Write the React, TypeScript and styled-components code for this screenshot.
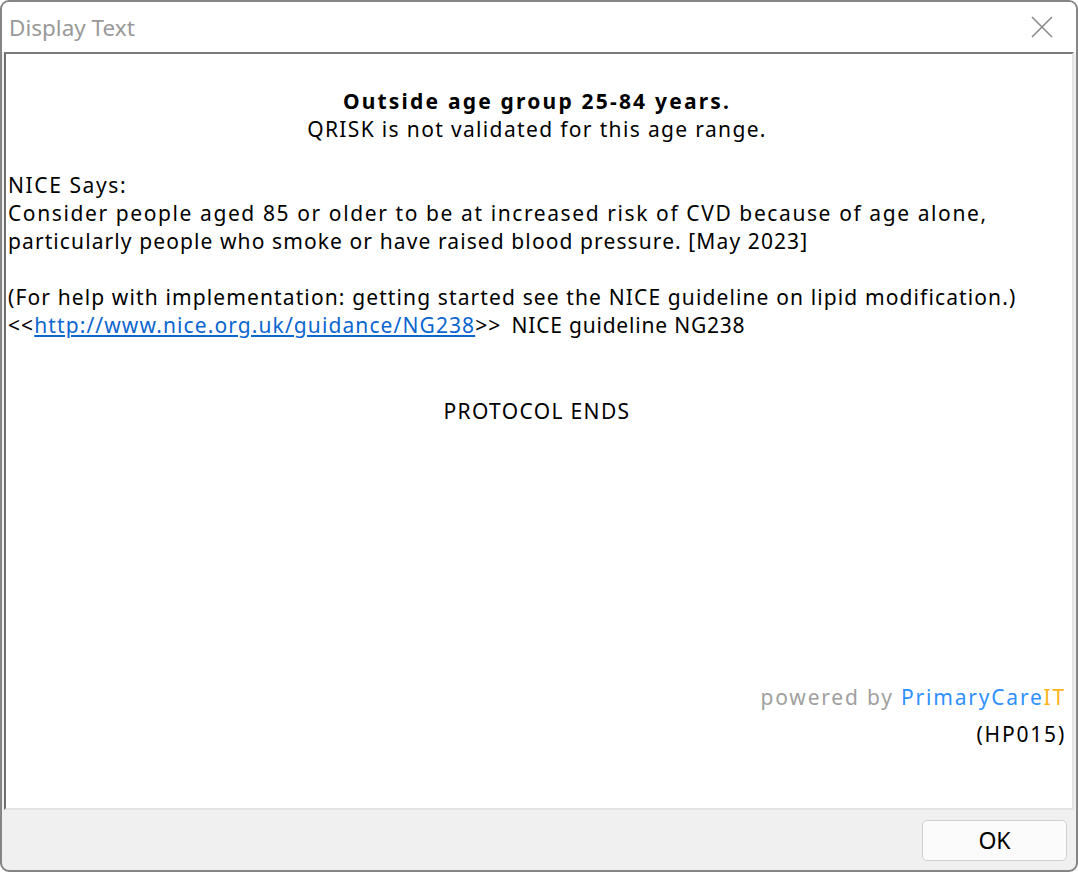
import React from "react";
import styled, { createGlobalStyle } from "styled-components";

const GlobalStyle = createGlobalStyle`
  html, body {
    margin: 0;
    padding: 0;
    background: #ffffff;
  }
`;

const Window = styled.div`
  box-sizing: border-box;
  width: 1078px;
  height: 872px;
  border: 2px solid #858585;
  border-radius: 9px;
  background: #f0f0f0;
  display: flex;
  flex-direction: column;
  overflow: hidden;
`;

const TitleBar = styled.div`
  height: 50px;
  background: #ffffff;
  display: flex;
  align-items: center;
  justify-content: space-between;
  padding: 0 14px 0 7px;
  font-family: "Noto Sans", "Open Sans", sans-serif;
  font-size: 22.5px;
  color: #999999;
`;

const CloseButton = styled.div`
  width: 40px;
  height: 40px;
  display: flex;
  align-items: center;
  justify-content: center;
`;

const Panel = styled.div`
  flex: 1;
  margin: 0 2px 0 2px;
  background: #ffffff;
  border-top: 2px solid #7a7a7a;
  border-left: 2px solid #6e6e6e;
  border-right: 2px solid #e3e3e3;
  border-bottom: 2px solid #e3e3e3;
  display: flex;
  flex-direction: column;
  padding: 33px 6px 55px 2px;
  font-family: "Noto Sans", "Open Sans", sans-serif;
  font-size: 21px;
  letter-spacing: 1.35px;
  line-height: 28px;
  color: #000000;
`;

const Centered = styled.div<{ $bold?: boolean }>`
  text-align: center;
  font-weight: ${(p) => (p.$bold ? 700 : 400)};
  letter-spacing: ${(p) => (p.$bold ? "2.2px" : "inherit")};
`;

const Para = styled.div<{ $gap?: number }>`
  margin-top: ${(p) => p.$gap ?? 0}px;
`;

const Line = styled.div<{ $track?: number }>`
  white-space: nowrap;
  letter-spacing: ${(p) => (p.$track != null ? `${p.$track}px` : "inherit")};
`;

const Link = styled.a`
  color: #0b66d0;
  text-decoration: underline;
`;

const Aside = styled.span`
  margin-left: 10px;
  letter-spacing: 0.8px;
`;

const Credits = styled.div`
  margin-top: auto;
  text-align: right;
  line-height: 37px;
  letter-spacing: 1.8px;
`;

const Powered = styled.span`
  color: #a0a0a0;
`;

const Brand = styled.span<{ $tone: string }>`
  color: ${(p) => p.$tone};
`;

const Footer = styled.div`
  height: 60px;
  display: flex;
  align-items: center;
  justify-content: flex-end;
  padding: 0 9px;
`;

const OkButton = styled.button`
  width: 145px;
  height: 41px;
  border: 1px solid #d0d0d0;
  border-radius: 5px;
  background: #fbfbfb;
  font-family: "Noto Sans", "Open Sans", sans-serif;
  font-size: 23px;
  color: #000;
  cursor: pointer;
`;

export default function App() {
  return (
    <>
      <GlobalStyle />
      <Window>
        <TitleBar>
          <span>Display Text</span>
          <CloseButton>
            <svg width="22" height="22" viewBox="0 0 22 22">
              <path d="M1 1 L21 21 M21 1 L1 21" stroke="#8a8a8a" strokeWidth="1.6" fill="none" />
            </svg>
          </CloseButton>
        </TitleBar>
        <Panel>
          <Centered $bold>Outside age group 25-84 years.</Centered>
          <Centered>QRISK is not validated for this age range.</Centered>
          <Para $gap={28}>
            <Line $track={1.6}>NICE Says:</Line>
            <Line $track={1.6}>
              Consider people aged 85 or older to be at increased risk of CVD because of age alone,
            </Line>
            <Line $track={1.1}>
              particularly people who smoke or have raised blood pressure. [May 2023]
            </Line>
          </Para>
          <Para $gap={28}>
            <Line $track={1.12}>
              (For help with implementation: getting started see the NICE guideline on lipid modification.)
            </Line>
            <Line $track={1.1}>
              &lt;&lt;<Link href="#">http://www.nice.org.uk/guidance/NG238</Link>&gt;&gt;
              <Aside>NICE guideline NG238</Aside>
            </Line>
          </Para>
          <Para $gap={58}>
            <Centered>PROTOCOL ENDS</Centered>
          </Para>
          <Credits>
            <Powered>powered by </Powered>
            <Brand $tone="#2f90ff">PrimaryCare</Brand>
            <Brand $tone="#ffb21a">IT</Brand>
            <br />
            (HP015)
          </Credits>
        </Panel>
        <Footer>
          <OkButton>OK</OkButton>
        </Footer>
      </Window>
    </>
  );
}
